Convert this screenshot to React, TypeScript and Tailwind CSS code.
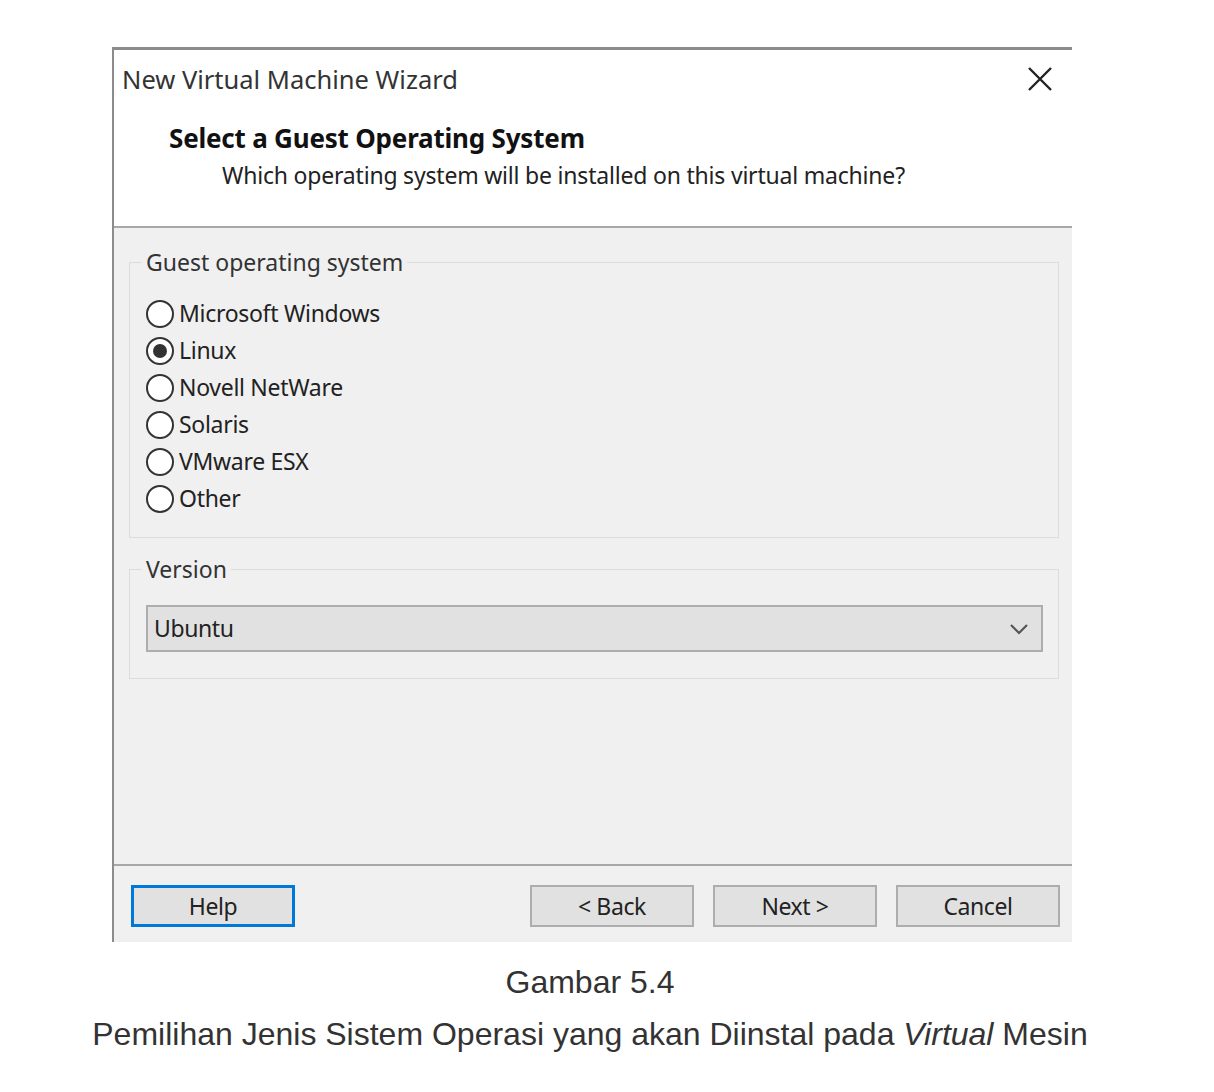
import React from "react";

const options = ["Microsoft Windows", "Linux", "Novell NetWare", "Solaris", "VMware ESX", "Other"];

const Radio = ({ label, checked }: { label: string; checked?: boolean }) => (
  <div className="flex h-[37px] items-center">
    <span className="flex h-[28px] w-[28px] shrink-0 items-center justify-center rounded-full border-2 border-[#333] bg-white">
      {checked && <span className="h-[14px] w-[14px] rounded-full bg-[#333]" />}
    </span>
    <span className="ml-[5px] text-[#222]">{label}</span>
  </div>
);

const Button = ({ label, primary }: { label: string; primary?: boolean }) => (
  <button
    className={
      "flex h-[42px] w-[164px] items-center justify-center bg-[#e1e1e1] text-[#222] " +
      (primary ? "border-[3px] border-[#0078d7]" : "border-2 border-[#adadad]")
    }
  >
    {label}
  </button>
);

export default function App() {
  return (
    <div className="min-h-[1092px] w-[1214px] bg-white pt-[47px]">
      <div
        className="ml-[112px] flex h-[895px] w-[960px] flex-col border-t-[3px] border-l-2 border-[#8c8c8c] text-[23px]"
        style={{ fontFamily: '"Noto Sans", sans-serif' }}
      >
        {/* header */}
        <div className="h-[176px] bg-white">
          <div className="flex h-[58px] items-center justify-between pl-[8px] pr-[16px]">
            <span className="text-[25.5px] text-[#333]">New Virtual Machine Wizard</span>
            <svg width="28" height="28" viewBox="0 0 28 28" className="mr-[2px]">
              <path d="M3 3 L25 25 M25 3 L3 25" stroke="#222" strokeWidth="2.4" />
            </svg>
          </div>
          <div className="pl-[55px] pt-[11px] text-[26px] font-bold leading-[38px] tracking-[-0.2px] text-[#111]">
            Select a Guest Operating System
          </div>
          <div className="pl-[108px] leading-[37px] tracking-[-0.2px] text-[#222]">
            Which operating system will be installed on this virtual machine?
          </div>
        </div>
        <div className="h-[2px] bg-[#a8a8a8]" />

        {/* body */}
        <div className="flex flex-1 flex-col bg-[#f0f0f0] px-[15px] pt-[20px]">
          <fieldset className="w-[930px] border border-[#dcdcdc] pb-[20px] pl-[16px]">
            <legend className="ml-[-4px] px-[4px] leading-[28px] text-[#333]">
              Guest operating system
            </legend>
            <div className="mt-[19px] tracking-[-0.3px]">
              {options.map((o) => (
                <Radio key={o} label={o} checked={o === "Linux"} />
              ))}
            </div>
          </fieldset>

          <fieldset className="mt-[17px] w-[930px] border border-[#dcdcdc] pb-[26px] pl-[16px] pr-[15px]">
            <legend className="ml-[-4px] px-[4px] leading-[28px] text-[#333]">Version</legend>
            <div className="mt-[22px] flex h-[47px] items-center justify-between border-2 border-[#adadad] bg-[#e1e1e1] pl-[6px] pr-[12px]">
              <span className="tracking-[-0.4px] text-[#222]">Ubuntu</span>
              <svg width="20" height="12" viewBox="0 0 20 12">
                <path d="M2 2 L10 10 L18 2" fill="none" stroke="#555" strokeWidth="2.2" />
              </svg>
            </div>
          </fieldset>
        </div>

        {/* footer */}
        <div className="h-[2px] bg-[#a8a8a8]" />
        <div className="flex h-[76px] items-start bg-[#f0f0f0] pl-[17px] pr-[12px] pt-[19px] tracking-[-0.4px]">
          <Button label="Help" primary />
          <div className="ml-auto flex gap-[19px]">
            <Button label="< Back" />
            <Button label="Next >" />
            <Button label="Cancel" />
          </div>
        </div>
      </div>

      {/* caption */}
      <div
        className="w-[1180px] text-center text-[32px] text-[#333]"
        style={{ fontFamily: '"Liberation Sans", Arial, sans-serif' }}
      >
        <div className="mt-[20px] leading-[40px]">Gambar 5.4</div>
        <div className="mt-[12px] leading-[40px]">
          Pemilihan Jenis Sistem Operasi yang akan Diinstal pada <i>Virtual</i> Mesin
        </div>
      </div>
    </div>
  );
}
